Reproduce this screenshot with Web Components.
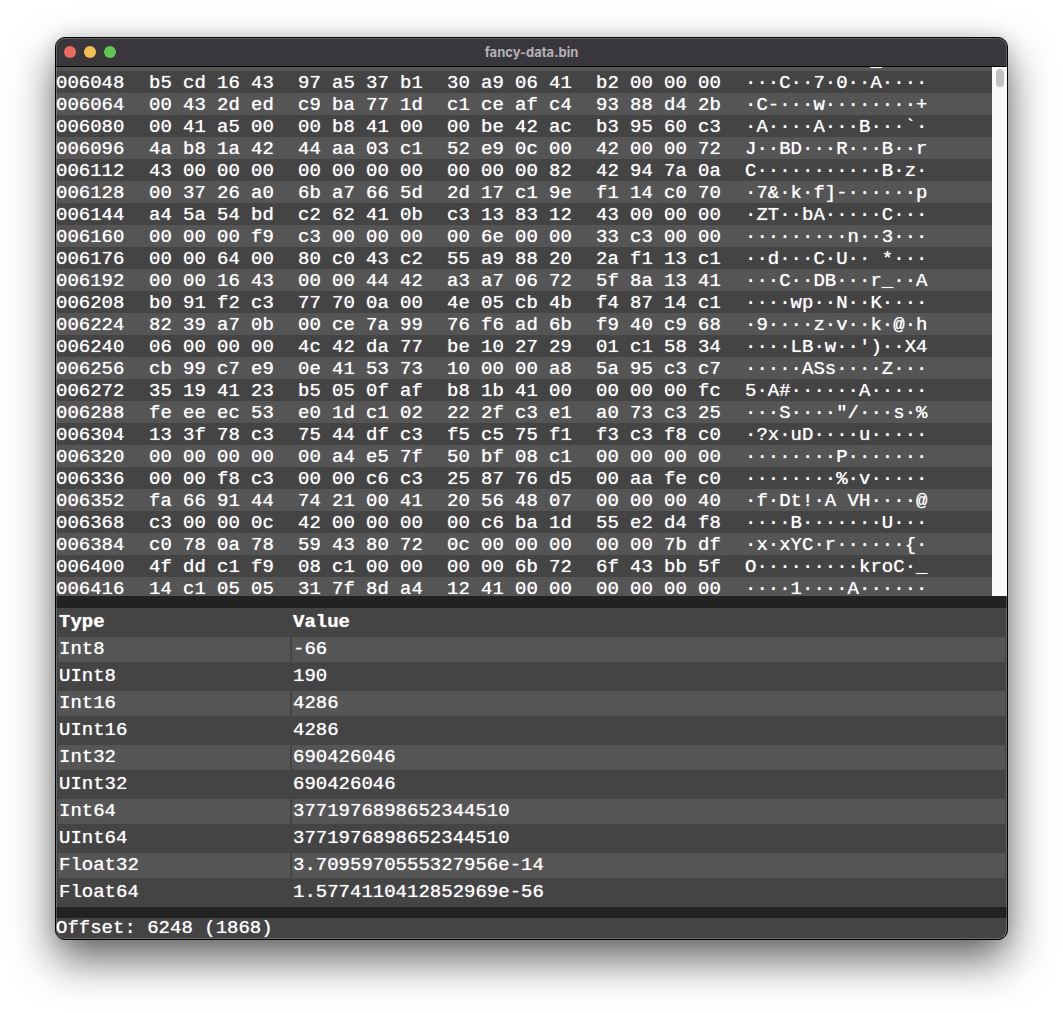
<!DOCTYPE html>
<html lang="en">
<head>
<meta charset="utf-8">
<title>fancy-data.bin</title>
<style>
  html, body { height: 100%; margin: 0; }
  body {
    box-sizing: border-box;
    padding: 37px 55px 73px;
    background: #fff;
    overflow: hidden;
    font: 19px "Liberation Mono", "DejaVu Sans Mono", monospace;
    color: #fff;
    --band-dark: #444;
    --band-light: #555;
    --gutter: #222;
    --glow: 0 0 1px rgba(255,255,255,.8);
  }
</style>
</head>
<body>
<app-window heading="fancy-data.bin">
  <hex-view></hex-view>
  <pane-divider></pane-divider>
  <value-table></value-table>
  <pane-divider thin></pane-divider>
  <status-bar>Offset: 6248 (1868)</status-bar>
</app-window>

<template id="app-window">
  <style>
    :host {
      display: flex; flex-direction: column; position: relative;
      box-sizing: border-box; height: 100%;
      border: 1px solid #000; border-radius: 10px;
      background: var(--band-dark);
      box-shadow: 0 20px 44px rgba(0,0,0,.6), 0 0 16px rgba(0,0,0,.12);
    }
    :host::after {
      content: ""; position: absolute; inset: 0; border-radius: 9px;
      box-shadow: inset 0 0 0 1px rgba(255,255,255,.2); pointer-events: none;
    }
    header {
      display: grid; grid-template-columns: 1fr auto 1fr; align-items: center;
      height: 28px; padding: 0 8px; border-bottom: 1px solid #000;
      border-radius: 9px 9px 0 0;
      background: #39373c;
    }
    .lights { display: flex; gap: 8px; }
    button { width: 12px; height: 12px; padding: 0; border: 0; border-radius: 50%; }
    .close { background: #ec6a5e; }
    .min { background: #f4bf4f; }
    .max { background: #61c554; }
    h1 { margin: 0; font: bold 13px/16px Inter, sans-serif; color: #b3b1b5; }
    main { flex: 1; min-height: 0; display: flex; flex-direction: column; overflow: hidden; border-radius: 0 0 9px 9px; text-shadow: var(--glow); }
  </style>
  <header>
    <div class="lights">
      <button class="close" aria-label="Close"></button>
      <button class="min" aria-label="Minimize"></button>
      <button class="max" aria-label="Zoom"></button>
    </div>
    <h1></h1>
  </header>
  <main><slot></slot></main>
</template>

<template id="hex-view">
  <style>
    :host { flex: 1; min-height: 0; display: flex; overflow: hidden; }
    .rows { flex: 1; min-width: 0; overflow: hidden; }
    table { width: 100%; border-collapse: collapse; table-layout: fixed; margin-top: -18px; }
    tr { background: var(--band-dark); }
    tr:nth-child(odd) { background: var(--band-light); }
    th, td { height: 20px; padding: 2px 0 0; line-height: 20px; font-weight: normal; text-align: left; white-space: pre; }
    .offset { width: 93px; }
    .byte { width: 34px; }
    .last { width: 47px; }
    .track { width: 15px; background: #fafafa; display: flex; justify-content: center; padding-top: 2px; box-sizing: border-box; }
    .thumb { width: 8px; height: 18px; border-radius: 4px; background: #c1c1c1; }
  </style>
  <div class="rows"><table><colgroup></colgroup><tbody></tbody></table></div>
  <div class="track"><div class="thumb"></div></div>
</template>

<template id="value-table">
  <style>
    :host { display: block; }
    table { width: 100%; table-layout: fixed; border-collapse: separate; border-spacing: 2px; }
    .type { width: 232px; }
    th, td { padding: 1px; height: 23px; line-height: 23px; text-align: left; box-sizing: content-box; }
    tbody tr:nth-child(odd) td { background: var(--band-light); }
  </style>
  <table>
    <colgroup><col class="type"><col></colgroup>
    <thead><tr><th>Type</th><th>Value</th></tr></thead>
    <tbody></tbody>
  </table>
</template>

<script>
  const stamp = (el, id) => {
    const root = el.attachShadow({ mode: "open" });
    root.append(document.getElementById(id).content.cloneNode(true));
    return root;
  };

  const FIRST_OFFSET = 6048;
  const BYTES = `
b5 cd 16 43 97 a5 37 b1 30 a9 06 41 b2 00 00 00
00 43 2d ed c9 ba 77 1d c1 ce af c4 93 88 d4 2b
00 41 a5 00 00 b8 41 00 00 be 42 ac b3 95 60 c3
4a b8 1a 42 44 aa 03 c1 52 e9 0c 00 42 00 00 72
43 00 00 00 00 00 00 00 00 00 00 82 42 94 7a 0a
00 37 26 a0 6b a7 66 5d 2d 17 c1 9e f1 14 c0 70
a4 5a 54 bd c2 62 41 0b c3 13 83 12 43 00 00 00
00 00 00 f9 c3 00 00 00 00 6e 00 00 33 c3 00 00
00 00 64 00 80 c0 43 c2 55 a9 88 20 2a f1 13 c1
00 00 16 43 00 00 44 42 a3 a7 06 72 5f 8a 13 41
b0 91 f2 c3 77 70 0a 00 4e 05 cb 4b f4 87 14 c1
82 39 a7 0b 00 ce 7a 99 76 f6 ad 6b f9 40 c9 68
06 00 00 00 4c 42 da 77 be 10 27 29 01 c1 58 34
cb 99 c7 e9 0e 41 53 73 10 00 00 a8 5a 95 c3 c7
35 19 41 23 b5 05 0f af b8 1b 41 00 00 00 00 fc
fe ee ec 53 e0 1d c1 02 22 2f c3 e1 a0 73 c3 25
13 3f 78 c3 75 44 df c3 f5 c5 75 f1 f3 c3 f8 c0
00 00 00 00 00 a4 e5 7f 50 bf 08 c1 00 00 00 00
00 00 f8 c3 00 00 c6 c3 25 87 76 d5 00 aa fe c0
fa 66 91 44 74 21 00 41 20 56 48 07 00 00 00 40
c3 00 00 0c 42 00 00 00 00 c6 ba 1d 55 e2 d4 f8
c0 78 0a 78 59 43 80 72 0c 00 00 00 00 00 7b df
4f dd c1 f9 08 c1 00 00 00 00 6b 72 6f 43 bb 5f
14 c1 05 05 31 7f 8d a4 12 41 00 00 00 00 00 00`.trim().split("\n").map(line => line.split(" "));

  const printable = hex => {
    const code = parseInt(hex, 16);
    return code >= 0x20 && code < 0x7f ? String.fromCharCode(code) : "·";
  };

  customElements.define("app-window", class extends HTMLElement {
    constructor() {
      super();
      stamp(this, "app-window").querySelector("h1").textContent = this.getAttribute("heading");
    }
  });

  customElements.define("hex-view", class extends HTMLElement {
    constructor() {
      super();
      const root = stamp(this, "hex-view");
      const cols = root.querySelector("colgroup");
      const addCol = name => { const c = document.createElement("col"); c.className = name; cols.append(c); };
      addCol("offset");
      for (let i = 0; i < 16; i++) addCol(i % 4 === 3 ? "last" : "byte");
      addCol("ascii");

      const body = root.querySelector("tbody");
      // The row scrolled almost out of view at the top: only its underscore shows.
      const partial = body.insertRow();
      partial.insertCell().colSpan = 17;
      partial.insertCell().textContent = " ".repeat(11) + "_";

      BYTES.forEach((bytes, n) => {
        const row = body.insertRow();
        const head = document.createElement("th");
        head.scope = "row";
        head.textContent = String(FIRST_OFFSET + n * 16).padStart(6, "0");
        row.append(head);
        bytes.forEach(b => { row.insertCell().textContent = b; });
        row.insertCell().textContent = bytes.map(printable).join("");
      });
    }
  });

  customElements.define("value-table", class extends HTMLElement {
    constructor() {
      super();
      const body = stamp(this, "value-table").querySelector("tbody");
      [
        ["Int8", "-66"], ["UInt8", "190"],
        ["Int16", "4286"], ["UInt16", "4286"],
        ["Int32", "690426046"], ["UInt32", "690426046"],
        ["Int64", "3771976898652344510"], ["UInt64", "3771976898652344510"],
        ["Float32", "3.7095970555327956e-14"], ["Float64", "1.5774110412852969e-56"],
      ].forEach(pair => {
        const row = body.insertRow();
        pair.forEach(text => { row.insertCell().textContent = text; });
      });
    }
  });

  customElements.define("pane-divider", class extends HTMLElement {
    constructor() {
      super();
      this.attachShadow({ mode: "open" }).innerHTML =
        `<style>
          :host { display: block; flex: none; height: 12px; background: var(--gutter); }
          :host([thin]) { height: 11px; }
        </style>`;
    }
  });

  customElements.define("status-bar", class extends HTMLElement {
    constructor() {
      super();
      this.attachShadow({ mode: "open" }).innerHTML =
        `<style>:host { display: block; flex: none; line-height: 21px; }</style><slot></slot>`;
    }
  });
</script>
</body>
</html>
